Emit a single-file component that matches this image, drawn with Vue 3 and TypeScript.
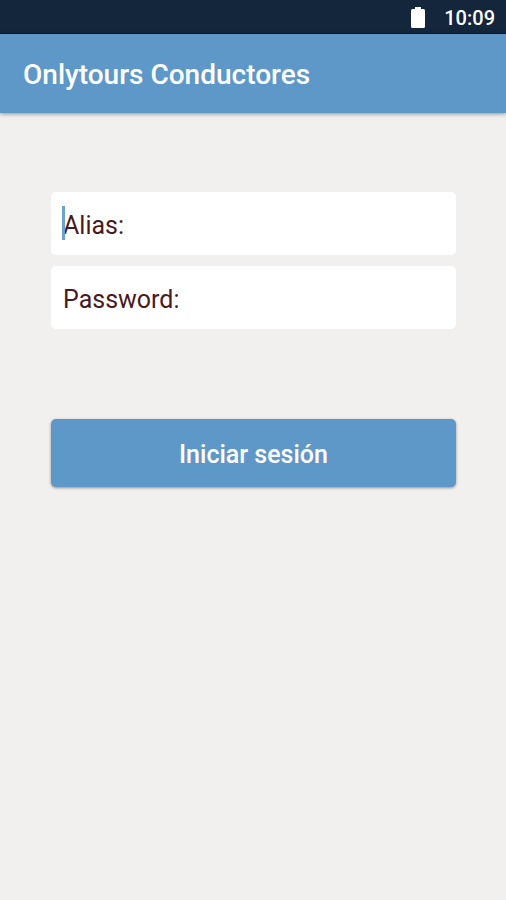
<script setup lang="ts">
import { ref } from 'vue'

const alias = ref('')
const password = ref('')
</script>

<template>
  <div class="screen">
    <div class="status">
      <svg class="battery" viewBox="0 0 14 22" aria-hidden="true">
        <path d="M4 0h6v2h2.500a1.500 1.500 0 0 1 1.500 1.500v16a1.500 1.500 0 0 1-1.500 1.500h-11A1.500 1.500 0 0 1 0 19.500v-16A1.500 1.500 0 0 1 1.500 2H4z" fill="#fff" />
      </svg>
      <span>10:09</span>
    </div>
    <header class="bar">
      <h1>Onlytours Conductores</h1>
    </header>
    <form class="login" @submit.prevent>
      <div class="field focused">
        <input v-model="alias" type="text" placeholder="Alias:" aria-label="Alias" />
      </div>
      <div class="field">
        <input v-model="password" type="password" placeholder="Password:" aria-label="Password" />
      </div>
      <button type="submit">Iniciar sesión</button>
    </form>
  </div>
</template>

<style>
body {
  background: #f1f0ee;
}
</style>

<style scoped>
.screen {
  min-height: 100vh;
  background: #f1f0ee;
  font-family: Roboto, sans-serif;
}
.status {
  display: flex;
  align-items: center;
  justify-content: flex-end;
  gap: 19px;
  height: 34px;
  padding: 2px 11px 0;
  box-sizing: border-box;
  border-bottom: 1px solid #071427;
  background: #14263c;
  color: #fff;
  font-size: 20px;
  font-weight: 500;
}
.battery {
  width: 14px;
  height: 22px;
}
.bar {
  display: flex;
  align-items: center;
  height: 79px;
  padding: 2px 23px 0;
  box-sizing: border-box;
  background: #5e98c9;
  box-shadow: 0 1px 4px rgba(0, 0, 0, 0.4);
}
h1 {
  margin: 0;
  color: #fff;
  font-size: 28px;
  font-weight: 500;
}
.login {
  display: flex;
  flex-direction: column;
  gap: 11px;
  padding: 79px 50px 0 51px;
}
.field {
  position: relative;
}
.focused::before {
  content: '';
  position: absolute;
  left: 11px;
  top: 14px;
  width: 3px;
  height: 34px;
  background: #6fa3cf;
}
input {
  display: block;
  width: 100%;
  height: 63px;
  padding: 4px 12px 0;
  box-sizing: border-box;
  border: 0;
  border-radius: 5px;
  background: #fff;
  color: #4a1a1c;
  font: 400 25px Roboto, sans-serif;
  outline: none;
}
input::placeholder {
  color: #4a1a1c;
  opacity: 1;
}
button {
  height: 68px;
  margin-top: 79px;
  padding: 2px 0 0;
  border: 0;
  border-radius: 5px;
  background: #5e98c9;
  box-shadow: 0 1px 3px rgba(0, 0, 0, 0.4);
  color: #fff;
  font: 500 25px Roboto, sans-serif;
}
</style>
